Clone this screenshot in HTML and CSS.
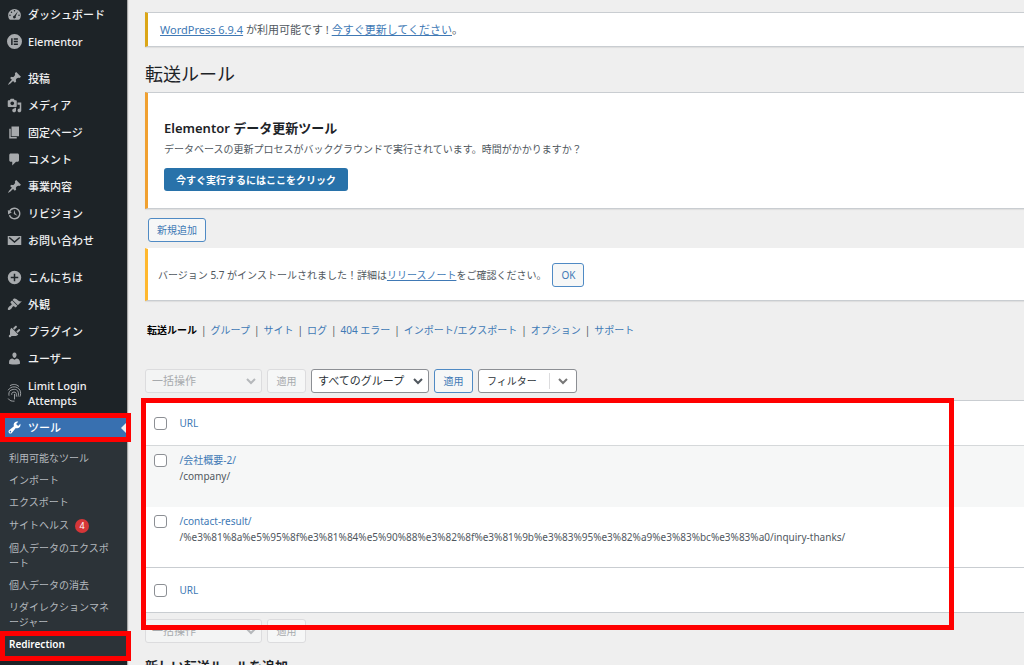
FILE: index.html
```
<!DOCTYPE html>
<html lang="ja">
<head>
    <meta charset="utf-8">
    <title>転送ルール</title>
    <link rel="stylesheet" href="styles.css">
</head>
<body>
    <nav class="sidebar">
        <ul class="menu">
            <li><a href="#"><svg viewBox="0 0 20 20"><path fill-rule="evenodd" d="M3.8 17h12.4A8.5 8.5 0 1 0 3.8 17zM10 4a1 1 0 1 1 0 2 1 1 0 0 1 0-2zM6 6a1 1 0 1 1 0 2 1 1 0 0 1 0-2zm8.5-.5L11.5 12.5a1.8 1.8 0 1 1-1.8-.9zM4 10a1 1 0 1 1 0 2 1 1 0 0 1 0-2zm12 0a1 1 0 1 1 0 2 1 1 0 0 1 0-2z"/></svg>ダッシュボード</a></li>
            <li><a href="#"><svg viewBox="0 0 20 20"><path fill-rule="evenodd" d="M10 0a10 10 0 1 0 0 20 10 10 0 0 0 0-20zM5.5 5.5h2v9h-2zm3.500 0h5.500v2H9zm0 3.500h5.500v2H9zm0 3.500h5.500v2H9z"/></svg>Elementor</a></li>
            <li class="gap"><a href="#"><svg viewBox="0 0 20 20"><path d="M10.44 3.02l1.82-1.82 6.36 6.35-1.83 1.82c-1.05-.68-2.48-.57-3.41.36l-.75.75c-.92.93-1.04 2.35-.35 3.41l-1.83 1.82-2.41-2.41-2.8 2.79c-.42.42-3.38 2.71-3.8 2.29s1.86-3.39 2.28-3.81l2.79-2.79L4.1 9.36l1.83-1.82c1.05.69 2.48.57 3.4-.36l.75-.75c.93-.92 1.05-2.35.36-3.41z"/></svg>投稿</a></li>
            <li><a href="#"><svg viewBox="0 0 20 20"><path d="M13 11V4c0-.55-.45-1-1-1h-1.67L9 1H5L3.67 3H2c-.55 0-1 .45-1 1v7c0 .55.45 1 1 1h10c.55 0 1-.45 1-1zM7 4.5c1.38 0 2.5 1.12 2.5 2.5S8.38 9.5 7 9.5 4.5 8.38 4.5 7 5.62 4.5 7 4.5zM14 6h5v10.5c0 1.38-1.12 2.5-2.5 2.5S14 17.88 14 16.5s1.12-2.5 2.5-2.5c.17 0 .34.02.5.05V9h-3V6zm-4 8.05V13h2v3.5c0 1.38-1.12 2.5-2.5 2.5S7 17.88 7 16.5 8.12 14 9.5 14c.17 0 .34.02.5.05z"/></svg>メディア</a></li>
            <li><a href="#"><svg viewBox="0 0 20 20"><path d="M6 15V2h10v13H6zm-1 1h8v2H3V5h2v11z"/></svg>固定ページ</a></li>
            <li><a href="#"><svg viewBox="0 0 20 20"><path d="M5 2h9c1.1 0 2 .9 2 2v7c0 1.1-.9 2-2 2h-2l-5 5v-5H5c-1.1 0-2-.9-2-2V4c0-1.1.9-2 2-2z"/></svg>コメント</a></li>
            <li><a href="#"><svg viewBox="0 0 20 20"><path d="M10.44 3.02l1.82-1.82 6.36 6.35-1.83 1.82c-1.05-.68-2.48-.57-3.41.36l-.75.75c-.92.93-1.04 2.35-.35 3.41l-1.83 1.82-2.41-2.41-2.8 2.79c-.42.42-3.38 2.71-3.8 2.29s1.86-3.39 2.28-3.81l2.79-2.79L4.1 9.36l1.83-1.82c1.05.69 2.48.57 3.4-.36l.75-.75c.93-.92 1.05-2.35.36-3.41z"/></svg>事業内容</a></li>
            <li><a href="#"><svg viewBox="0 0 20 20"><path d="M13.65 2.88c3.93 2.01 5.48 6.84 3.47 10.77s-6.83 5.48-10.77 3.47c-1.87-.96-3.2-2.56-3.86-4.4l1.64-1.03c.45 1.57 1.52 2.95 3.08 3.76 3.01 1.54 6.69.35 8.23-2.66 1.55-3.01.36-6.69-2.65-8.24C9.78 3.01 6.1 4.2 4.56 7.21l1.88.97-4.95 3.08-.39-5.82 1.78.91C4.9 2.4 9.75.89 13.65 2.88zm-4.36 7.83C9.11 10.53 9 10.28 9 10c0-.07.03-.12.04-.19h-.01L10 5l.97 4.81L14 13l-4.5-2.12.02-.02c-.08-.04-.16-.09-.23-.15z"/></svg>リビジョン</a></li>
            <li><a href="#"><svg viewBox="0 0 20 20"><path d="M1 4h18v12H1z"/><path class="cut" d="M3 6l7 6 7-6"/></svg>お問い合わせ</a></li>
            <li class="gap"><a href="#"><svg viewBox="0 0 20 20"><path fill-rule="evenodd" d="M10 1a9 9 0 1 0 0 18 9 9 0 0 0 0-18zM9 5h2v4h4v2h-4v4H9v-4H5V9h4z"/></svg>こんにちは</a></li>
            <li><a href="#"><svg viewBox="0 0 20 20"><path d="M14.48 11.06L7.41 3.99l1.5-1.5c.5-.56 2.3-.47 3.51.32 1.21.8 1.43 1.28 2.91 2.1 1.18.64 2.45 1.26 4.45.85zm-.71.71L6.7 4.7 4.93 6.47c-.39.39-.39 1.02 0 1.41l1.06 1.06c.39.39.39 1.03 0 1.42-.6.6-1.43 1.11-2.21 1.69-.35.26-.7.53-1.01.84C1.43 14.23.4 16.08 1.4 17.07c.99 1 2.84-.03 4.18-1.36.31-.31.58-.66.85-1.02.57-.78 1.08-1.61 1.69-2.21.39-.39 1.02-.39 1.41 0l1.06 1.06c.39.39 1.02.39 1.41 0z"/></svg>外観</a></li>
            <li><a href="#"><svg viewBox="0 0 20 20"><path d="M13.11 4.36L9.87 7.6 8 5.73l3.24-3.24c.35-.34 1.05-.2 1.56.32.52.51.66 1.21.31 1.55zm-8 1.77l.91-1.12 9.01 9.01-1.19.84c-.71.71-2.63 1.16-3.82 1.16H6.14L4.9 17.26c-.59.59-1.54.59-2.12 0-.59-.58-.59-1.53 0-2.12l1.24-1.24v-3.88c0-1.13.4-3.19 1.09-3.89zm7.26 3.97l3.24-3.24c.34-.35 1.04-.21 1.55.31.52.51.66 1.21.31 1.55l-3.24 3.25z"/></svg>プラグイン</a></li>
            <li><a href="#"><svg viewBox="0 0 20 20"><path d="M10 9.25c-2.27 0-2.73-3.44-2.73-3.44C7 4.02 7.82 2 9.97 2c2.16 0 2.98 2.02 2.71 3.81 0 0-.41 3.44-2.68 3.44zm0 2.57L12.72 10c2.39 0 4.52 2.33 4.52 4.53v2.49s-3.65 1.13-7.24 1.13c-3.65 0-7.24-1.13-7.24-1.13v-2.49c0-2.25 1.94-4.48 4.47-4.48z"/></svg>ユーザー</a></li>
            <li><a href="#"><svg class="limit" viewBox="0 0 16 22"><path d="M3 3C6 1 10 1 13 4M1 8C4 3 11 3 14 8c1 2 1 5 0 7M2 14C1 9 4 7 8 7s5 4 4 8M5 13c-1-4 6-4 5 0v2M8 12v6M1 17c2 3 4 3 7 3"/></svg><span>Limit Login Attempts</span></a></li>
            <li class="current marked"><a href="#"><svg viewBox="0 0 20 20"><path d="M16.68 9.77c-1.34 1.34-3.3 1.67-4.95.99l-5.41 6.52c-.99.99-2.59.99-3.58 0s-.99-2.59 0-3.57l6.52-5.42c-.68-1.65-.35-3.61.99-4.95 1.28-1.28 3.12-1.62 4.72-1.06l-2.89 2.89 2.82 2.82 2.86-2.87c.53 1.58.18 3.39-1.08 4.65zM3.81 16.21c.4.39 1.04.39 1.43 0 .4-.4.4-1.04 0-1.43-.39-.4-1.03-.4-1.43 0-.39.39-.39 1.03 0 1.43z"/></svg>ツール</a></li>
        </ul>
        <ul class="submenu">
            <li><a href="#">利用可能なツール</a></li>
            <li><a href="#">インポート</a></li>
            <li><a href="#">エクスポート</a></li>
            <li class="health"><a href="#">サイトヘルス</a><span class="count">4</span></li>
            <li><a href="#">個人データのエクスポート</a></li>
            <li><a href="#">個人データの消去</a></li>
            <li><a href="#">リダイレクションマネージャー</a></li>
            <li class="active marked"><a href="#">Redirection</a></li>
        </ul>
    </nav>

    <main class="content">
        <div class="notice update">
            <a href="#">WordPress 6.9.4</a> が利用可能です ! <a href="#">今すぐ更新してください</a>。
        </div>
        <h1>転送ルール</h1>
        <div class="notice elementor">
            <h2>Elementor データ更新ツール</h2>
            <p>データベースの更新プロセスがバックグラウンドで実行されています。時間がかかりますか？</p>
            <button class="primary">今すぐ実行するにはここをクリック</button>
        </div>
        <button class="button add">新規追加</button>
        <div class="notice version">
            <span>バージョン 5.7 がインストールされました！詳細は<a href="#">リリースノート</a>をご確認ください。</span>
            <button class="button">OK</button>
        </div>
        <ul class="tabs">
            <li><a class="on" href="#">転送ルール</a></li>
            <li><a href="#">グループ</a></li>
            <li><a href="#">サイト</a></li>
            <li><a href="#">ログ</a></li>
            <li><a href="#">404 エラー</a></li>
            <li><a href="#">インポート/エクスポート</a></li>
            <li><a href="#">オプション</a></li>
            <li><a href="#">サポート</a></li>
        </ul>
        <div class="actions">
            <select aria-label="一括操作" disabled><option>一括操作</option></select>
            <button class="button" disabled>適用</button>
            <select class="groups" aria-label="グループ"><option>すべてのグループ</option></select>
            <button class="button">適用</button>
            <button class="filter"><span>フィルター</span><svg viewBox="0 0 12 8"><path d="M2 2l4 4 4-4"/></svg></button>
        </div>
        <div class="list">
            <table>
                <thead>
                    <tr><td class="check"><input type="checkbox" aria-label="すべて選択"></td><th><a href="#">URL</a></th></tr>
                </thead>
                <tbody>
                    <tr>
                        <td class="check"><input type="checkbox" aria-label="/会社概要-2/ を選択"></td>
                        <td><a href="#">/会社概要-2/</a><br><span class="target">/company/</span></td>
                    </tr>
                    <tr>
                        <td class="check"><input type="checkbox" aria-label="/contact-result/ を選択"></td>
                        <td><a href="#">/contact-result/</a><br><span class="target">/%e3%81%8a%e5%95%8f%e3%81%84%e5%90%88%e3%82%8f%e3%81%9b%e3%83%95%e3%82%a9%e3%83%bc%e3%83%a0/inquiry-thanks/</span></td>
                    </tr>
                </tbody>
                <tfoot>
                    <tr><td class="check"><input type="checkbox" aria-label="すべて選択"></td><th><a href="#">URL</a></th></tr>
                </tfoot>
            </table>
        </div>
        <div class="actions">
            <select aria-label="一括操作" disabled><option>一括操作</option></select>
            <button class="button" disabled>適用</button>
        </div>
        <h2 class="new">新しい転送ルールを追加</h2>
    </main>
</body>
</html>
```
FILE: styles.css
```
*{box-sizing:border-box;}
html, body{height:100%;overflow:hidden;}
body{margin:0;display:flex;background:#efefef;color:#50575e;font:10px/16px "Noto Sans", "Noto Sans CJK JP", sans-serif;}
ul{list-style:none;margin:0;padding:0;}
a{color:#4079b5;}
button, select, input{font:inherit;}

/* sidebar */
.sidebar{flex:none;width:127px;background:#1d2327;box-shadow:1px 0 1px #aaa;}
.menu{padding-top:1px;}
.menu a{display:flex;align-items:center;gap:6px;padding:6px 14px 6px 7px;color:#f0f0f1;font-size:11px;line-height:15px;font-weight:500;text-decoration:none;}
.menu svg{flex:none;width:15px;height:15px;fill:#a7aaad;}
.menu .cut{fill:none;stroke:#1d2327;stroke-width:2;}
.menu .limit{height:20px;fill:none;stroke:#a7aaad;stroke-width:1;}
.menu .gap{margin-top:10px;}
.menu .current{background:#3870b0;}
.menu .current a{color:#fff;}
.menu .current svg{fill:#fff;}
.current::before{content:"";position:absolute;right:0;top:8px;border:6px solid transparent;border-right-color:#efefef;border-left:0;}
.submenu{padding:7px 0 5px;background:#2c3338;}
.submenu li{padding:3px 10px 4px 9px;line-height:15px;}
.submenu a{color:#b4b9be;text-decoration:none;}
.submenu .health{display:flex;align-items:center;gap:6px;height:24px;}
.count{width:14px;height:14px;border-radius:7px;background:#d63638;color:#fff;font-size:9px;line-height:14px;text-align:center;}
.submenu .active a{color:#fff;font-weight:600;}

/* red outlines */
.marked{position:relative;}
.marked::after{content:"";position:absolute;top:-1px;bottom:-1px;left:0;right:-4px;border:5px solid #f00;z-index:1;}
.active.marked::after{top:-3px;bottom:-5px;}

/* content */
.content{flex:1;min-width:0;padding:12px 0 0 18px;}
.notice{background:#fff;border:1px solid #c9cdd1;border-width:1px 0 1px 3px;box-shadow:0 1px 1px #0001;}
.update{padding:8px 12px;border-left-color:#dba617;line-height:17px;font-size:11px;}
h1{margin:15px 0 6px;color:#1d2327;font-size:18px;line-height:24px;font-weight:400;}
.elementor{padding:25px 16px 17px;border-left-color:#f0a030;}
.elementor h2{margin:0 0 3px;color:#1d2327;font-size:13px;line-height:20px;font-weight:600;}
.elementor p{margin:0 0 11px;}
.primary{display:block;height:23px;padding:0 12px;border:0;border-radius:3px;background:#2872aa;color:#fff;font-weight:600;}
.button{height:24px;padding:0 8px;border:1px solid #4f8ac4;border-radius:3px;background:#f6f7f7;color:#4079b5;}
.button:disabled{border-color:#dcdcde;color:#a7aaad;}
.add{display:block;margin:9px 0 6px 3px;}
.version{display:flex;align-items:center;gap:6px;height:53px;padding:0 10px;border-left-color:#ffb82e;border-top-color:#fff;}
.tabs{display:flex;margin:21px 0 31px 2px;}
.tabs li + li::before{content:"|";margin:0 4px;}
.tabs a{text-decoration:none;}
.tabs .on{color:#000;font-weight:600;}
.actions{display:flex;gap:5px;}
.actions .button{width:39px;}
select{width:117px;height:24px;padding:0 6px;border:1px solid #8c8f94;border-radius:3px;appearance:none;font-size:11px;color:#2c3338;opacity:1;
    background:#fff url("data:image/svg+xml,%3Csvg xmlns='http://www.w3.org/2000/svg' viewBox='0 0 12 8'%3E%3Cpath d='M2 2l4 4 4-4' fill='none' stroke='%2350575e' stroke-width='2'/%3E%3C/svg%3E") no-repeat right 4px center/12px 8px;}
select:disabled{border-color:#dcdcde;color:#a7aaad;
    background:#f3f4f4 url("data:image/svg+xml,%3Csvg xmlns='http://www.w3.org/2000/svg' viewBox='0 0 12 8'%3E%3Cpath d='M2 2l4 4 4-4' fill='none' stroke='%23b5b8bb' stroke-width='2'/%3E%3C/svg%3E") no-repeat right 4px center/12px 8px;}
.groups{width:118px;}
.filter{display:flex;align-items:stretch;width:99px;height:24px;padding:3px 7px 3px 8px;border:1px solid #8c8f94;border-radius:3px;background:#fff;color:#2c3338;}
.filter svg{align-self:center;width:12px;height:8px;margin-left:7px;fill:none;stroke:#777;stroke-width:2;}
.filter span{flex:1;text-align:left;border-right:1px solid #dcdcde;}

/* rules table */
.list{position:relative;margin:7px 0 6px;}
.list::after{content:"";position:absolute;top:-2px;bottom:-17px;left:-4px;width:803px;border:5px solid #f00;pointer-events:none;}
table{width:100%;border-collapse:collapse;background:#fff;border:1px solid #c9cdd1;border-right:0;}
td, th{padding:0;text-align:left;vertical-align:top;font-weight:400;}
table a{text-decoration:none;}
thead tr, tfoot tr{height:45px;}
thead th, thead td, tfoot th, tfoot td{vertical-align:middle;}
thead tr{border-bottom:1px solid #d5d8da;}
tfoot tr{border-top:1px solid #c9cdd1;}
tbody tr{height:61px;}
tbody tr:first-child{background:#f6f7f7;}
tbody td{padding-top:6px;}
td.check{width:34px;padding-left:8px;}
.check input{display:block;appearance:none;width:13px;height:13px;margin:0;border:1px solid #8c8f94;border-radius:3px;background:#fff;}
tbody .check{padding-top:8px;}
.new{margin:13px 0 0;color:#1d2327;font-size:13px;line-height:20px;font-weight:600;}
```
